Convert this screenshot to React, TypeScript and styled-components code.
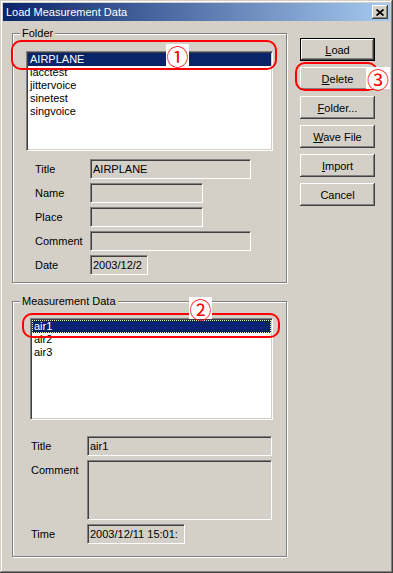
import { createGlobalStyle, styled } from "styled-components";

const FACE = "#d4d0c8";
const SHADOW = "#808080";
const DARK = "#404040";
const HILITE = "#0a246a";
const RED = "#ff0000";

const FOLDERS = ["AIRPLANE", "lacctest", "jittervoice", "sinetest", "singvoice"];
const MEASUREMENTS = ["air1", "air2", "air3"];

const GlobalStyle = createGlobalStyle`
  html, body {
    margin: 0;
    padding: 0;
    background: ${FACE};
  }
  body {
    font-family: "Liberation Sans", Arial, sans-serif;
    font-size: 11px;
    color: #000;
  }
`;

function App() {
  return (
    <>
      <GlobalStyle />
      <Window>
        <TitleBar>
          <TitleText>Load Measurement Data</TitleText>
          <CloseButton>
            <svg width="8" height="7" viewBox="0 0 8 7">
              <path d="M0.5 0.5 L7.5 6.5 M7.5 0.5 L0.5 6.5" stroke="#000" strokeWidth="1.7" fill="none" />
            </svg>
          </CloseButton>
        </TitleBar>
        <DialogBody>
          <LeftColumn>
            <Group $top={12} $bottom={7}>
              <Caption>Folder</Caption>
              <ListBox $top={11} $left={13} $width={247} $height={100}>
                {FOLDERS.map((name, index) => (
                  <ListItem key={name} $selected={index == 0}>
                    {name}
                  </ListItem>
                ))}
              </ListBox>
              <Form $top={8} $left={22} $labelWidth={55}>
                <Label>Title</Label>
                <Field $width={161}>AIRPLANE</Field>
                <Label>Name</Label>
                <Field $width={113} />
                <Label>Place</Label>
                <Field $width={113} />
                <Label>Comment</Label>
                <Field $width={161} />
                <Label>Date</Label>
                <Field $width={58}>2003/12/2</Field>
              </Form>
            </Group>
            <Group $top={18} $bottom={12}>
              <Caption>Measurement Data</Caption>
              <ListBox $top={10} $left={17} $width={243} $height={102}>
                {MEASUREMENTS.map((name, index) => (
                  <ListItem key={name} $selected={index == 0} $focused={index == 0}>
                    {name}
                  </ListItem>
                ))}
              </ListBox>
              <Form $top={16} $left={18} $labelWidth={56}>
                <Label>Title</Label>
                <Field $width={185}>air1</Field>
                <Label>Comment</Label>
                <Field $width={185} $height={60} />
                <Label>Time</Label>
                <Field $width={98}>2003/12/11 15:01:</Field>
              </Form>
            </Group>
          </LeftColumn>
          <ButtonColumn>
            <Button $default>
              <u>L</u>oad
            </Button>
            <Button>
              <u>D</u>elete
            </Button>
            <Button>
              <u>F</u>older...
            </Button>
            <Button>
              <u>W</u>ave File
            </Button>
            <Button>
              <u>I</u>mport
            </Button>
            <Button>Cancel</Button>
          </ButtonColumn>
        </DialogBody>

        <Callout $x={11} $y={40} $w={266} $h={30} />
        <Badge $x={166} $y={44} $w={23}>①</Badge>
        <Callout $x={22} $y={313} $w={258} $h={25} />
        <Badge $x={189} $y={297} $w={23}>②</Badge>
        <Callout $x={295} $y={62} $w={83} $h={29} />
        <Badge $x={366} $y={67} $w={24}>③</Badge>
      </Window>
    </>
  );
}

const Window = styled.div`
  position: relative;
  width: 393px;
  height: 573px;
  box-sizing: border-box;
  padding: 3px;
  background: ${FACE};
  box-shadow: inset -1px -1px 0 ${DARK}, inset 1px 1px 0 ${FACE},
    inset -2px -2px 0 ${SHADOW}, inset 2px 2px 0 #fff;
  display: flex;
  flex-direction: column;
  overflow: hidden;
`;

const TitleBar = styled.div`
  height: 18px;
  display: flex;
  align-items: center;
  padding: 0 2px 0 3px;
  background: linear-gradient(to right, ${HILITE}, #a6caf0);
  color: #fff;
`;

const TitleText = styled.div`
  flex: 1;
  font-size: 11px;
  line-height: 13px;
  white-space: nowrap;
`;

const CloseButton = styled.div`
  width: 16px;
  height: 14px;
  box-sizing: border-box;
  display: flex;
  align-items: center;
  justify-content: center;
  background: ${FACE};
  box-shadow: inset -1px -1px 0 ${DARK}, inset 1px 1px 0 #fff,
    inset -2px -2px 0 ${SHADOW};
`;

const DialogBody = styled.div`
  display: flex;
  gap: 13px;
  padding-left: 9px;
`;

const LeftColumn = styled.div`
  width: 275px;
  display: flex;
  flex-direction: column;
`;

const Group = styled.div<{ $top: number; $bottom: number }>`
  margin-top: ${(p) => p.$top}px;
  padding-bottom: ${(p) => p.$bottom}px;
  border: 1px solid ${SHADOW};
  box-shadow: inset 1px 1px 0 #fff, 1px 1px 0 #fff;
  display: flex;
  flex-direction: column;
  align-items: flex-start;
`;

const Caption = styled.div`
  margin: -7px 0 0 7px;
  padding: 0 2px;
  line-height: 13px;
  background: ${FACE};
`;

const ListBox = styled.div<{ $top: number; $left: number; $width: number; $height: number }>`
  margin: ${(p) => p.$top}px 0 0 ${(p) => p.$left}px;
  width: ${(p) => p.$width}px;
  height: ${(p) => p.$height}px;
  box-sizing: border-box;
  padding: 1px;
  background: #fff;
  border: 1px solid;
  border-color: ${SHADOW} #fff #fff ${SHADOW};
  box-shadow: inset 1px 1px 0 ${DARK}, inset -1px -1px 0 ${FACE};
`;

const ListItem = styled.div<{ $selected?: boolean; $focused?: boolean }>`
  height: 13px;
  line-height: 13px;
  padding-left: 2px;
  white-space: nowrap;
  background: ${(p) => (p.$selected ? HILITE : "transparent")};
  color: ${(p) => (p.$selected ? "#fff" : "#000")};
  ${(p) => (p.$focused ? "outline: 1px dotted #f3ecb0; outline-offset: -1px;" : "")}
`;

const Form = styled.div<{ $top: number; $left: number; $labelWidth: number }>`
  margin: ${(p) => p.$top}px 0 0 ${(p) => p.$left}px;
  display: grid;
  grid-template-columns: ${(p) => p.$labelWidth}px auto;
  row-gap: 4px;
  align-items: start;
  justify-items: start;
`;

const Label = styled.div`
  padding-top: 4px;
  line-height: 13px;
  white-space: nowrap;
`;

const Field = styled.div<{ $width: number; $height?: number }>`
  width: ${(p) => p.$width}px;
  height: ${(p) => p.$height ?? 20}px;
  box-sizing: border-box;
  padding: 2px 0 0 2px;
  line-height: 14px;
  white-space: nowrap;
  overflow: hidden;
  background: ${FACE};
  border: 1px solid;
  border-color: ${SHADOW} #fff #fff ${SHADOW};
  box-shadow: inset 1px 1px 0 ${DARK}, inset -1px -1px 0 ${FACE};
`;

const ButtonColumn = styled.div`
  display: flex;
  flex-direction: column;
  gap: 6px;
  padding-top: 17px;
`;

const Button = styled.button<{ $default?: boolean }>`
  width: 75px;
  height: 23px;
  box-sizing: border-box;
  padding: 0;
  font-family: "Liberation Sans", Arial, sans-serif;
  font-size: 11px;
  color: #000;
  background: ${FACE};
  border: ${(p) => (p.$default ? "1px solid #000" : "none")};
  box-shadow: inset -1px -1px 0 ${DARK}, inset 1px 1px 0 #fff,
    inset -2px -2px 0 ${SHADOW};
  u {
    text-decoration: underline;
    text-underline-offset: 1px;
  }
`;

const Callout = styled.div<{ $x: number; $y: number; $w: number; $h: number }>`
  position: absolute;
  left: ${(p) => p.$x}px;
  top: ${(p) => p.$y}px;
  width: ${(p) => p.$w}px;
  height: ${(p) => p.$h}px;
  box-sizing: border-box;
  border: 2px solid ${RED};
  border-radius: 10px;
  pointer-events: none;
`;

const Badge = styled.div<{ $x: number; $y: number; $w: number }>`
  position: absolute;
  left: ${(p) => p.$x}px;
  top: ${(p) => p.$y}px;
  width: ${(p) => p.$w}px;
  height: 22px;
  text-align: center;
  background: #fff;
  color: ${RED};
  font-family: "Noto Sans CJK JP", "DejaVu Sans", sans-serif;
  font-size: 22px;
  line-height: 22px;
`;

export default App;
